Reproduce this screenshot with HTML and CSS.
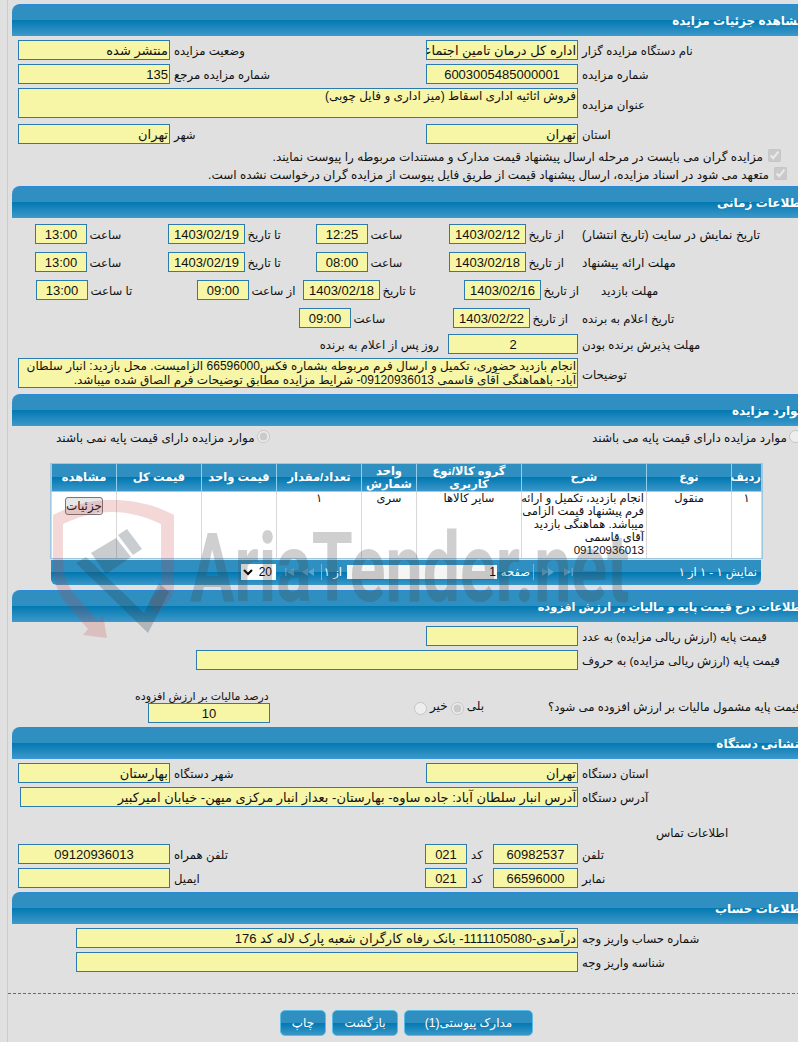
FILE: index.html
```html
<!DOCTYPE html>
<html lang="fa">
<head>
<meta charset="utf-8">
<title>مشاهده جزئیات مزایده</title>
<link rel="stylesheet" href="styles.css">
</head>
<body>
<div class="page">

<section class="sec">
  <h2 class="head">مشاهده جزئیات مزایده</h2>
  <div class="row main">
    <div class="fld">منتشر شده</div><div class="lbl">وضعیت مزایده</div>
    <div class="fld">اداره کل درمان تامین اجتماعی استان تهران</div><div class="lbl">نام دستگاه مزایده گزار</div>
  </div>
  <div class="row main">
    <div class="fld">135</div><div class="lbl">شماره مزایده مرجع</div>
    <div class="fld ctr">6003005485000001</div><div class="lbl">شماره مزایده</div>
  </div>
  <div class="row wide tall">
    <div class="fld area">فروش اثاثیه اداری اسقاط (میز اداری و فایل چوبی)</div><div class="lbl">عنوان مزایده</div>
  </div>
  <div class="row main gap6">
    <div class="fld">تهران</div><div class="lbl">شهر</div>
    <div class="fld">تهران</div><div class="lbl">استان</div>
  </div>
  <div class="check c1"><span>مزایده گران می بایست در مرحله ارسال پیشنهاد قیمت مدارک و مستندات مربوطه را پیوست نمایند.</span><input type="checkbox" checked disabled></div>
  <div class="check c2"><span>متعهد می شود در اسناد مزایده، ارسال پیشنهاد قیمت از طریق فایل پیوست از مزایده گران درخواست نشده است.</span><input type="checkbox" checked disabled></div>
</section>

<section class="sec s-time">
  <h2 class="head">اطلاعات زمانی</h2>
  <div class="row time gap6">
    <div class="fld ctr">13:00</div><div class="lbl">ساعت</div>
    <div class="fld ctr">1403/02/19</div><div class="lbl">تا تاریخ</div>
    <div class="fld ctr">12:25</div><div class="lbl">ساعت</div>
    <div class="fld ctr">1403/02/12</div><div class="lbl">از تاریخ</div>
    <div class="lbl">تاریخ نمایش در سایت (تاریخ انتشار)</div>
  </div>
  <div class="row time gap8">
    <div class="fld ctr">13:00</div><div class="lbl">ساعت</div>
    <div class="fld ctr">1403/02/19</div><div class="lbl">تا تاریخ</div>
    <div class="fld ctr">08:00</div><div class="lbl">ساعت</div>
    <div class="fld ctr">1403/02/18</div><div class="lbl">از تاریخ</div>
    <div class="lbl">مهلت ارائه پیشنهاد</div>
  </div>
  <div class="row visit gap8">
    <div class="fld ctr">13:00</div><div class="lbl">تا ساعت</div>
    <div class="fld ctr">09:00</div><div class="lbl">از ساعت</div>
    <div class="fld ctr">1403/02/18</div><div class="lbl">تا تاریخ</div>
    <div class="fld ctr">1403/02/16</div><div class="lbl">از تاریخ</div>
    <div class="lbl">مهلت بازدید</div>
  </div>
  <div class="row announce gap8">
    <div class="fld ctr">09:00</div><div class="lbl">ساعت</div>
    <div class="fld ctr">1403/02/22</div><div class="lbl">از تاریخ</div>
    <div class="lbl">تاریخ اعلام به برنده</div>
  </div>
  <div class="row accept gap6">
    <div class="lbl after">روز پس از اعلام به برنده</div>
    <div class="fld ctr">2</div>
    <div class="lbl">مهلت پذیرش برنده بودن</div>
  </div>
  <div class="row wide tall">
    <div class="fld area notes">انجام بازدید حضوری، تکمیل و ارسال فرم مربوطه بشماره فکس66596000 الزامیست. محل بازدید: انبار سلطان آباد- باهماهنگی آقای قاسمی 09120936013- شرایط مزایده مطابق توضیحات فرم الصاق شده میباشد.</div>
    <div class="lbl">توضیحات</div>
  </div>
</section>

<section class="sec">
  <h2 class="head">موارد مزایده</h2>
  <div class="radios">
    <div class="ropt r-no"><span>موارد مزایده دارای قیمت پایه نمی باشند</span><input type="radio" checked disabled></div>
    <div class="ropt r-yes"><span>موارد مزایده دارای قیمت پایه می باشند</span><input type="radio" disabled></div>
  </div>
  <div class="grid-wrap">
    <table class="items">
      <colgroup>
        <col class="c-idx"><col class="c-type"><col class="c-desc"><col class="c-group"><col class="c-unit"><col class="c-qty"><col class="c-price"><col class="c-total"><col class="c-view">
      </colgroup>
      <thead>
        <tr><th>ردیف</th><th>نوع</th><th>شرح</th><th>گروه کالا/نوع کاربری</th><th>واحد شمارش</th><th>تعداد/مقدار</th><th>قیمت واحد</th><th>قیمت کل</th><th>مشاهده</th></tr>
      </thead>
      <tbody>
        <tr>
          <td>۱</td><td>منقول</td>
          <td class="desc">انجام بازدید، تکمیل و ارائه<br>فرم پیشنهاد قیمت الزامی<br>میباشد. هماهنگی بازدید<br>آقای قاسمی<br>09120936013</td>
          <td>سایر کالاها</td><td>سری</td><td>۱</td><td></td><td></td>
          <td><button class="detail" type="button">جزئیات</button></td>
        </tr>
      </tbody>
    </table>
    <div class="pager">
      <select class="psize"><option>20</option></select>
      <svg class="pi i1" viewBox="0 0 12 8"><path d="M1 0v8h1.500V0zM3 4l7-4v8z"/></svg>
      <svg class="pi i2" viewBox="0 0 12 8"><path d="M0 4l6-4v8zM6 4l6-4v8z"/></svg>
      <i class="sep s1"></i>
      <div class="ptxt of">از ۱</div>
      <input class="pnum" type="text" value="1" readonly>
      <div class="ptxt pg">صفحه</div>
      <i class="sep s2"></i>
      <svg class="pi i3" viewBox="0 0 12 8"><path d="M12 4L6 0v8zM6 4L0 0v8z"/></svg>
      <svg class="pi i4" viewBox="0 0 12 8"><path d="M11 0v8H9.500V0zM9 4L2 0v8z"/></svg>
      <div class="ptxt show">نمایش ۱ - ۱ از ۱</div>
    </div>
  </div>
</section>

<section class="sec">
  <h2 class="head h-tax">اطلاعات درج قیمت پایه و مالیات بر ارزش افزوده</h2>
  <div class="row base1">
    <div class="fld"></div><div class="lbl">قیمت پایه (ارزش ریالی مزایده) به عدد</div>
  </div>
  <div class="row base2">
    <div class="fld"></div><div class="lbl">قیمت پایه (ارزش ریالی مزایده) به حروف</div>
  </div>
  <div class="taxrow">
    <div class="taxcol">
      <div class="lbl taxlbl">درصد مالیات بر ارزش افزوده</div>
      <div class="fld ctr taxfld">10</div>
    </div>
    <div class="taxopts">
      <input type="radio" disabled>
      <span>خیر</span>
      <input type="radio" checked disabled>
      <span>بلی</span>
    </div>
    <div class="lbl taxq">قیمت پایه مشمول مالیات بر ارزش افزوده می شود؟</div>
  </div>
</section>

<section class="sec">
  <h2 class="head h-addr">نشانی دستگاه</h2>
  <div class="row main">
    <div class="fld">بهارستان</div><div class="lbl">شهر دستگاه</div>
    <div class="fld">تهران</div><div class="lbl">استان دستگاه</div>
  </div>
  <div class="row addr">
    <div class="fld">آدرس انبار سلطان آباد: جاده ساوه- بهارستان- بعداز انبار مرکزی میهن- خیابان امیرکبیر</div><div class="lbl">آدرس دستگاه</div>
  </div>
  <div class="contact-title">اطلاعات تماس</div>
  <div class="row contact">
    <div class="fld ctr">09120936013</div><div class="lbl">تلفن همراه</div>
    <div class="fld ctr">021</div><div class="lbl">کد</div>
    <div class="fld ctr">60982537</div><div class="lbl">تلفن</div>
  </div>
  <div class="row contact">
    <div class="fld"></div><div class="lbl">ایمیل</div>
    <div class="fld ctr">021</div><div class="lbl">کد</div>
    <div class="fld ctr">66596000</div><div class="lbl">نمابر</div>
  </div>
</section>

<section class="sec last">
  <h2 class="head">اطلاعات حساب</h2>
  <div class="row account">
    <div class="fld">درآمدی-1111105080- بانک رفاه کارگران شعبه پارک لاله کد 176</div><div class="lbl">شماره حساب واریز وجه</div>
  </div>
  <div class="row account">
    <div class="fld"></div><div class="lbl">شناسه واریز وجه</div>
  </div>
</section>

<div class="actions">
  <button class="btn b-print" type="button">چاپ</button>
  <button class="btn b-back" type="button">بازگشت</button>
  <button class="btn b-docs" type="button">مدارک پیوستی(1)</button>
</div>

</div>

<div class="wm">
  <svg class="wm-logo" viewBox="0 0 130 145">
    <path class="wm-red" d="M3 20C25 8 45 5 62 5s40 3 62 15v70c0 8-3 14-8 19l-8 9-9-11 7-8c3-4 5-7 5-11V29C92 20 76 17 62 17S32 20 13 29v40c0 12 5 22 14 33l21 24 5-6 4 23-24-3 5-6-20-23C6 97 3 82 3 70z"/>
    <path class="wm-gray" d="M26 68l10-6 58 56 15-30 10 9-21 41z"/>
    <path class="wm-gray" d="M41 58l25-15 15 19-25 17z"/>
    <path class="wm-gray" d="M68 40l9-6 15 20-9 6z"/>
  </svg>
  <span class="wm-text">AriaTender.net</span>
</div>
</body>
</html>
```
FILE: styles.css
```css
html, body {
  margin: 0;
  padding: 0;
  height: 1042px;
  overflow: hidden;
  background: #e0e0e0;
}
body {
  position: relative;
  font-family: "Liberation Sans", "DejaVu Sans", sans-serif;
  font-size: 12px;
  color: #111;
}
.page {
  width: 818px;
  height: 1042px;
  box-sizing: border-box;
  margin-left: 7px;
  padding: 4px 0 0 4px;
  border-left: 1px solid #cbcbcb;
}
.sec { width: 790px; }
.s-time { padding-bottom: 6px; }
.head {
  height: 32px;
  margin: 0;
  box-sizing: border-box;
  line-height: 32px;
  font-size: 12px;
  font-weight: bold;
  color: #fff;
  direction: rtl;
  text-align: right;
  text-indent: -3px;
  white-space: nowrap;
  border-top: 1px solid #2b8ad6;
  border-bottom: 1px solid #3a97d8;
  border-top-left-radius: 8px;
  background: linear-gradient(#2e8fc0 0, #2e8fc0 49%, #0278b2 50%, #3a97c8 100%);
}
.h-tax { font-size: 11.300px; }
.h-addr { text-indent: 3px; }
.row { display: grid; margin-top: 4px; height: 20px; padding-left: 6px; }
.gap6 { margin-top: 6px; }
.gap8 { margin-top: 8px; }
.fld {
  box-sizing: border-box;
  height: 20px;
  padding: 0 1px;
  line-height: 20px;
  font-size: 13px;
  background: #f7f5a6;
  border: 1px solid #2b7bae;
  direction: rtl;
  text-align: right;
  white-space: nowrap;
  overflow: hidden;
}
.ctr { text-align: center; }
.lbl {
  padding-left: 4px;
  font-size: 11.700px;
  line-height: 22px;
  direction: rtl;
  text-align: left;
  white-space: nowrap;
}
.main { grid-template-columns: 152px 256px 152px 1fr; }
.wide { grid-template-columns: 560px 1fr; }
.tall { height: 30px; }
.tall .lbl { line-height: 34px; }
.area { height: 30px; font-size: 12px; white-space: normal; line-height: 15px; }
.notes { line-height: 14px; }
.check {
  display: flex;
  justify-content: flex-end;
  align-items: center;
  height: 18px;
  direction: ltr;
}
.check span { direction: rtl; }
.check input { margin: 0 0 4px 5px; width: 13px; height: 13px; }
.c1 { margin-top: 4px; padding-right: 21px; }
.c2 { padding-right: 15px; margin-bottom: 2px; }
.time { grid-template-columns: 52px 81px 77px 71px 52px 81px 77px 56px 1fr; padding-left: 23px; }
.visit { grid-template-columns: 52px 109px 52px 54px 77px 84px 77px 60px 1fr; padding-left: 24px; }
.announce { grid-template-columns: 52px 102px 77px 52px 1fr; padding-left: 287px; }
.time .lbl, .visit .lbl, .announce .lbl { padding-left: 2.500px; }
.time .lbl:last-child, .visit .lbl:last-child, .announce .lbl:last-child { padding-left: 0; }
.time .lbl:last-child { font-size: 12.200px; }
.accept { grid-template-columns: 126px 130px 1fr; padding-left: 310px; margin-bottom: 4px; }
.accept .after { padding-left: 0; padding-right: 9px; text-align: right; }
.radios { position: relative; display: flex; height: 24px; direction: ltr; }
.ropt { display: flex; align-items: center; }
.ropt span { direction: rtl; white-space: nowrap; }
.ropt input { margin: 0 0 3px 2px; width: 13px; height: 13px; }
.r-no { margin-left: 44px; width: 526px; }
.r-yes { margin-left: 10px; }
.grid-wrap { width: 710px; margin: 14px 0 5px 39px; }
.items {
  width: 710px;
  table-layout: fixed;
  border-collapse: collapse;
  direction: rtl;
  background: #fff;
  outline: 1px solid #9fc6dd;
}
.c-idx { width: 30px; } .c-type { width: 85px; } .c-desc { width: 125px; }
.c-group { width: 105px; } .c-unit { width: 55px; } .c-qty { width: 85px; }
.c-price { width: 75px; } .c-total { width: 85px; } .c-view { width: 65px; }
.items th {
  height: 27px;
  padding: 0;
  font-size: 11.500px;
  line-height: 13px;
  color: #fff;
  border: 1px solid #8fd0ee;
  border-width: 0 1px 1px;
  background: linear-gradient(#2e8fc0 0, #2e8fc0 49%, #0278b2 50%, #3a97c8 100%);
}
.items td {
  height: 66px;
  padding: 0 2px;
  box-sizing: border-box;
  vertical-align: top;
  text-align: center;
  font-size: 11.500px;
  line-height: 13px;
  border: 1px solid #d8d8d8;
  border-width: 0 1px;
}
.items td.desc { text-align: right; white-space: nowrap; }
.detail {
  display: block;
  width: 38px;
  height: 18px;
  margin: 5px 11px 0 0;
  padding: 0;
  font: 12px "Liberation Sans", "DejaVu Sans", sans-serif;
  color: #111;
  background: #e8e8e8;
  border: 1px solid #777;
  border-radius: 3px;
}
.pager {
  display: flex;
  align-items: center;
  height: 25px;
  margin-top: 2px;
  box-sizing: border-box;
  padding-left: 190px;
  padding-right: 4px;
  direction: ltr;
  border-bottom-left-radius: 6px;
  border-bottom-right-radius: 6px;
  background: linear-gradient(#2e8fc0 0, #2e8fc0 49%, #0278b2 50%, #3a97c8 100%);
}
.psize {
  width: 35px;
  height: 16px;
  margin: 0;
  padding: 0;
  font: 12px "Liberation Sans", sans-serif;
  border: 0;
  background: #fff;
  direction: rtl;
}
.pi { flex: none; width: 12px; height: 8px; fill: #5aa3cb; }
.i1 { margin-left: 8px; }
.i2 { margin-left: 6px; }
.i3 { margin-left: 8px; }
.i4 { margin-left: 8px; }
.sep { display: block; flex: none; width: 1px; height: 16px; background: #7ab5d6; }
.s1 { margin-left: 7px; }
.s2 { margin-left: 3px; }
.ptxt { flex: none; color: #fff; direction: rtl; white-space: nowrap; font-size: 11.500px; }
.of { width: 14px; margin-left: 6px; }
.pg { width: 27px; margin-left: 6px; }
.show { margin-left: auto; }
.pnum {
  flex: none;
  width: 150px;
  height: 14px;
  margin-left: 5px;
  padding: 0 1px;
  box-sizing: border-box;
  border: 0;
  font: 12px "Liberation Sans", sans-serif;
  direction: rtl;
  background: #f5f5f5;
}
.base1 { grid-template-columns: 152px 1fr; padding-left: 414px; }
.base2 { grid-template-columns: 382px 1fr; padding-left: 184px; }
.taxrow { display: flex; height: 33px; margin: 20px 0 4px; direction: ltr; }
.taxcol { width: 135px; margin-left: 123px; }
.lbl.taxlbl { height: 13px; padding: 0; font-size: 11px; line-height: 13px; }
.taxfld { width: 122px; margin-left: 13px; }
.taxopts { display: flex; align-items: center; flex: none; width: 100px; margin: 0 0 0 144px; }
.taxopts input { width: 13px; height: 13px; margin: 4px 0 0; }
.taxopts span { margin: 0 3px; direction: rtl; }
.lbl.taxq { margin-left: 34px; padding: 0; line-height: 33px; }
.addr { grid-template-columns: 558px 1fr; padding-left: 8px; }
.contact-title { height: 14px; margin-top: 19px; font-size: 11.700px; direction: rtl; text-align: left; padding-left: 644px; line-height: 14px; }
.contact { grid-template-columns: 152px 255px 42px 26px 85px 1fr; margin-top: 4px; }
.contact:last-child { margin-bottom: 4px; }
.account { grid-template-columns: 502px 1fr; padding-left: 64px; }
.last { height: 81px; }
.actions {
  display: flex;
  gap: 6px;
  margin: 20px 0 0 -4px;
  padding-left: 272px;
  padding-top: 16px;
  border-top: 1px dashed #2b7bae;
  direction: ltr;
}
.btn {
  height: 26px;
  padding: 0;
  font: 12px "Liberation Sans", "DejaVu Sans", sans-serif;
  color: #fff;
  border: 1px solid #58bce8;
  border-radius: 5px;
  background: linear-gradient(#2e8fc0 0, #2e8fc0 49%, #0278b2 50%, #3a97c8 100%);
}
.b-print { width: 46px; }
.b-back { width: 66px; }
.b-docs { width: 129px; }
.wm { position: absolute; left: 0; top: 0; width: 798px; height: 1042px; overflow: hidden; pointer-events: none; }
.wm-logo { position: absolute; left: 50px; top: 495px; width: 130px; height: 145px; }
.wm-red { fill: rgba(200, 60, 60, 0.2); }
.wm-gray { fill: rgba(50, 60, 70, 0.26); }
.wm-text {
  position: absolute;
  left: 190px;
  top: 512px;
  font: bold 96px/112px Roboto, sans-serif;
  color: rgba(70, 70, 70, 0.26);
  white-space: nowrap;
  transform-origin: 0 0;
  transform: scaleX(0.69);
}
```
